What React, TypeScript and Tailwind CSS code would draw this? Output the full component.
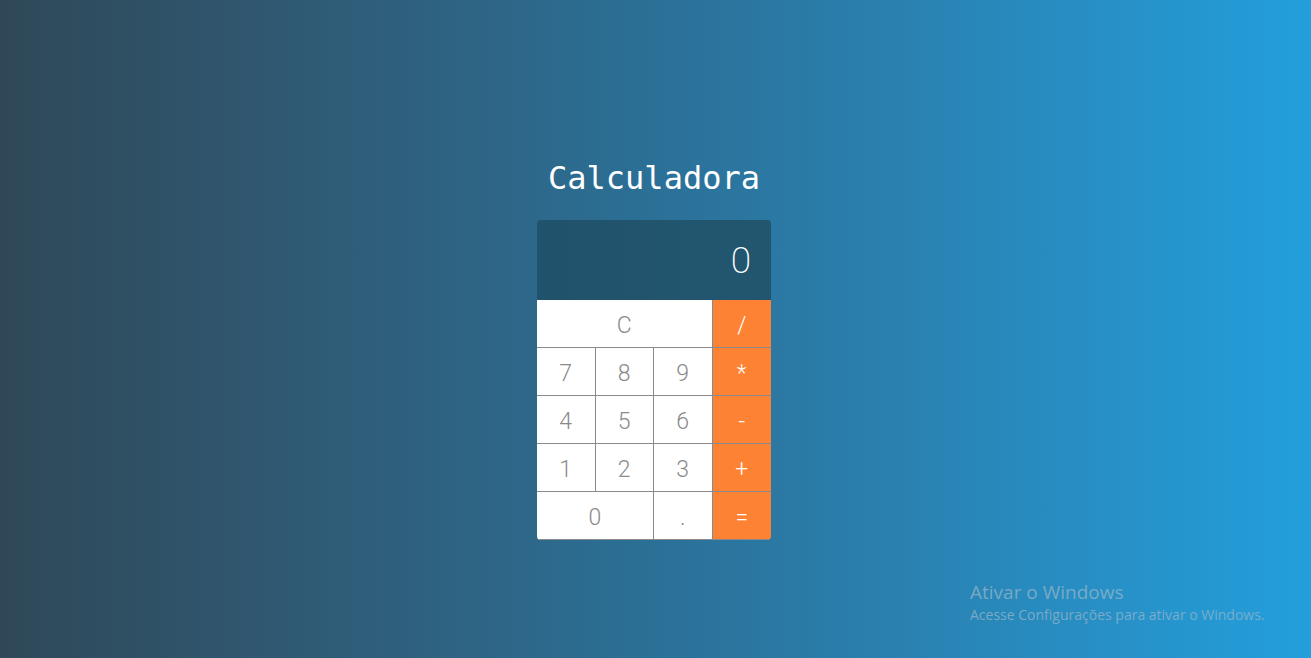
import React from 'react';

type Key = { label: string; span?: string; op?: boolean };

const keys: Key[] = [
  { label: 'C', span: 'col-span-3' },
  { label: '/', op: true },
  { label: '7' },
  { label: '8' },
  { label: '9' },
  { label: '*', op: true },
  { label: '4' },
  { label: '5' },
  { label: '6' },
  { label: '-', op: true },
  { label: '1' },
  { label: '2' },
  { label: '3' },
  { label: '+', op: true },
  { label: '0', span: 'col-span-2' },
  { label: '.' },
  { label: '=', op: true },
];

export default function App() {
  const [display, setDisplay] = React.useState('0');

  const press = (k: string) => {
    if (k === 'C') return setDisplay('0');
    if (k === '=') {
      try {
        // eslint-disable-next-line no-new-func
        const r = Function(`return (${display})`)();
        setDisplay(String(r));
      } catch {
        setDisplay('0');
      }
      return;
    }
    setDisplay((d) => (d === '0' && k !== '.' ? k : d + k));
  };

  return (
    <div className="relative h-[658px] w-full overflow-hidden bg-gradient-to-r from-[#2f4858] via-[#2b7097] to-[#229fdc] font-['DejaVu_Sans_Mono',monospace]">
      <div className="flex flex-col items-center pr-[3px] pt-[158px]">
        <h1 className="text-[32px] leading-[40px] text-white">Calculadora</h1>

        <div className="mt-[22px] w-[234px] overflow-hidden rounded">
          <div className="flex h-[80px] items-center justify-end bg-gradient-to-r from-[#21526c] to-[#22566f] pr-[20px] pt-[2px] font-['Roboto',sans-serif] text-[37px] font-extralight text-white">
            {display}
          </div>
          <div className="grid grid-cols-4 font-['Roboto',sans-serif]">
            {keys.map((k) => (
              <button
                key={k.label}
                onClick={() => press(k.label)}
                className={`${k.span ?? ''} flex h-[48px] items-center justify-center border-b border-[#8a8a8a] pt-[5px] text-[23px] font-light ${
                  k.op ? 'bg-[#fd8233] text-white' : 'border-r bg-white text-[#8a8a8a]'
                }`}
              >
                {k.label}
              </button>
            ))}
          </div>
        </div>
      </div>

      <div className="absolute left-[970px] top-[580px] font-['Open_Sans',sans-serif] text-[#8fb3c9]/80">
        <div className="text-[19px] leading-[24px]">Ativar o Windows</div>
        <div className="text-[14px] leading-[22px]">Acesse Configurações para ativar o Windows.</div>
      </div>
    </div>
  );
}
